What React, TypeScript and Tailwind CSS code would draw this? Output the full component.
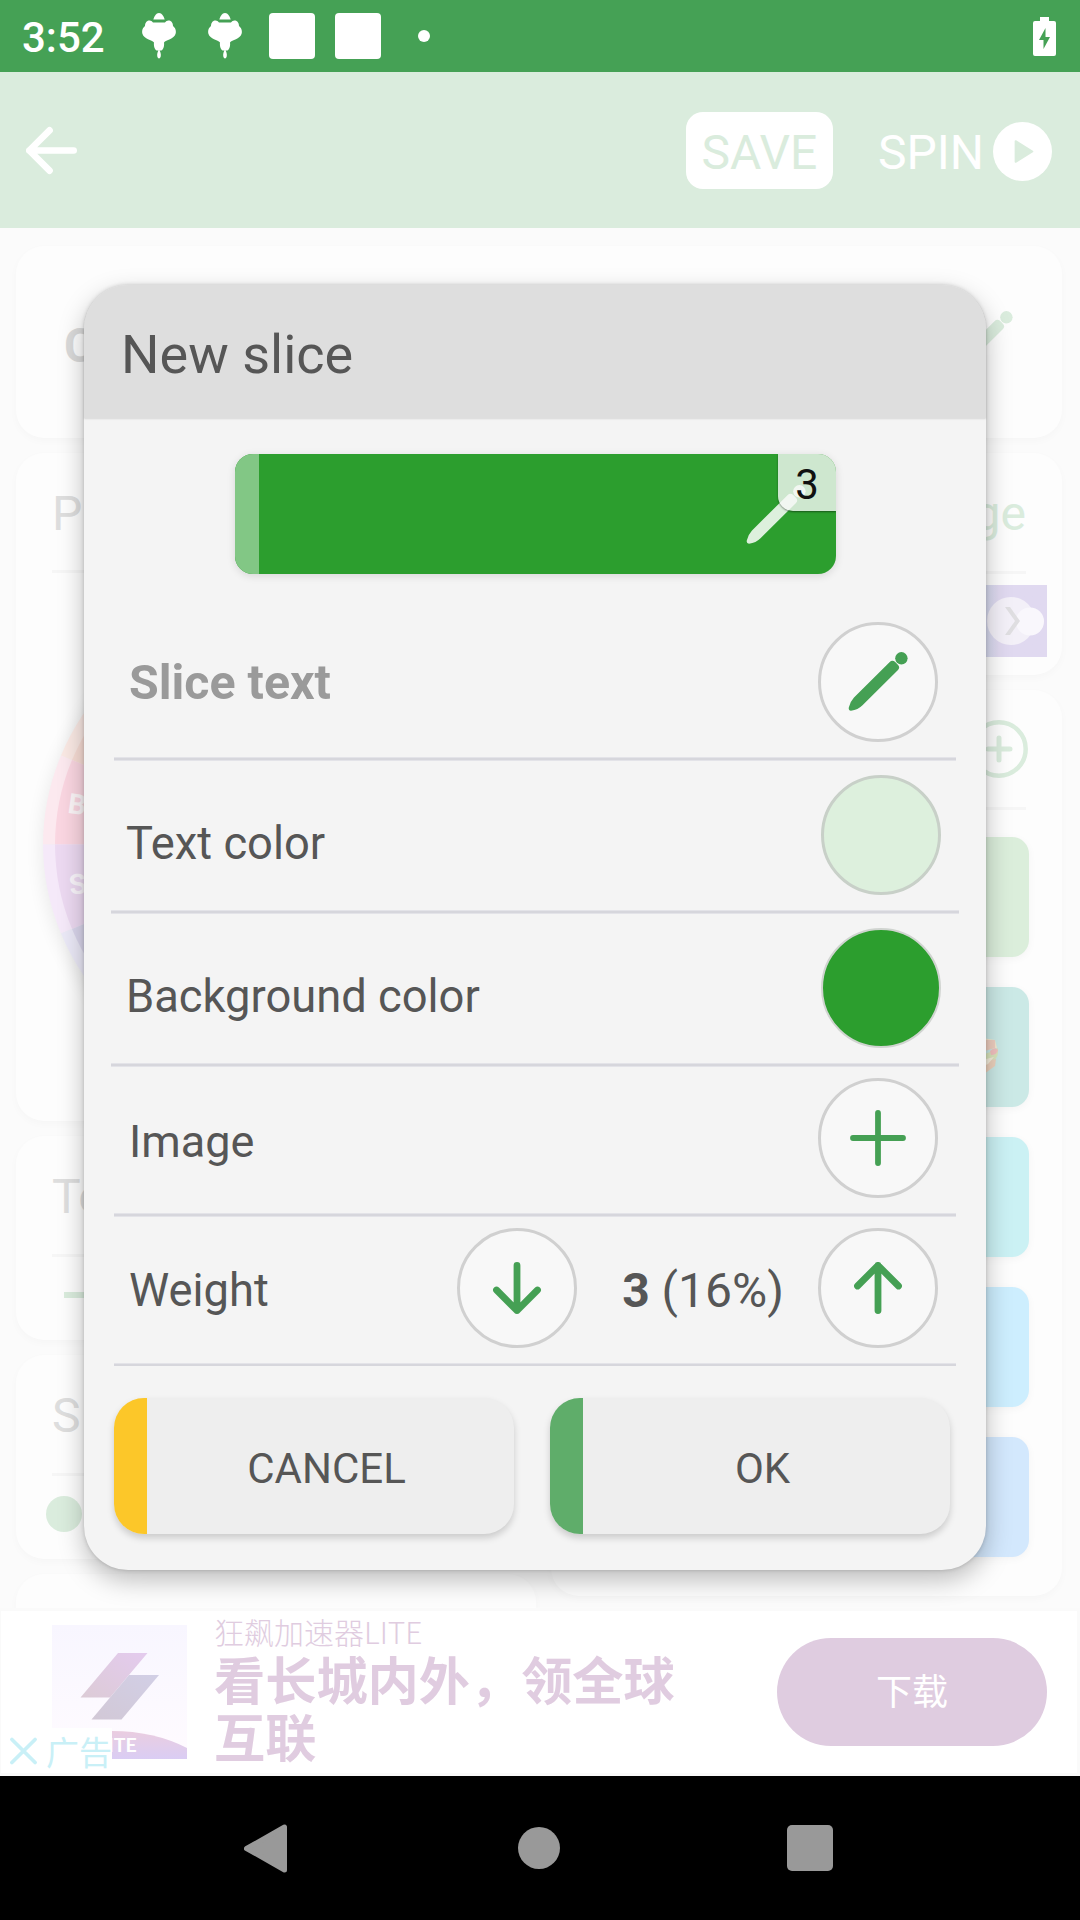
import React from "react";

function Pen({ className }: { className: string }) {
  return (
    <svg viewBox="0 0 60 60" className={className} fill="currentColor">
      <circle cx="53.4" cy="6.3" r="6.2" />
      <path d="M41.500 10.200 Q44.200 7.700 47 9.800 L50.300 13.200 Q52.200 15.600 50 18 L14.500 53.300 Q10 57.800 3 58.800 Q0.200 58.400 0.800 55.500 Q2.200 49.500 6 45.500 Z" />
    </svg>
  );
}

function Balloon() {
  return (
    <svg viewBox="0 0 34 46" className="h-[46px] w-[34px]" fill="#fff">
      <path d="M17 0 C20 0 21.500 3 22.700 6.500 H11.300 C12.500 3 14 0 17 0Z" />
      <path d="M11 9.500 H23 C25 6 31 7 31 13 C33.500 15 34.500 18 33.500 21 C32 26 24 27 22 29.500 C22.500 33 21.500 36 19.500 37.500 H14.500 C12.500 36 11.500 33 12 29.500 C10 27 2 26 .5 21 C-.5 18 .5 15 3 13 C3 7 9 6 11 9.500Z" />
      <path d="M17 36 C18 38 19.300 41 18.700 43.500 C18 46 16 46 15.300 43.500 C14.700 41 16 38 17 36Z" />
    </svg>
  );
}

function Arrow({ className }: { className: string }) {
  return (
    <svg viewBox="0 0 52 52" className={className} fill="none" stroke="currentColor" strokeWidth="6.8" strokeLinecap="round" strokeLinejoin="round">
      <path d="M26 3.400 V48.600 M5.500 24 L26 3.400 L46.500 24" />
    </svg>
  );
}

function Card({ className, children }: { className: string; children?: React.ReactNode }) {
  return (
    <div className={`overflow-hidden rounded-[28px] bg-[#fdfdfd] shadow-[0_3px_8px_rgba(0,0,0,0.025)] ${className}`}>{children}</div>
  );
}

function Hairline() {
  return <div className="h-[3px] bg-[#f6f6f6]" />;
}

function Wheel() {
  return (
    <svg viewBox="0 0 520 664" className="block h-[664px] w-[520px]">
      <defs>
        <filter id="soft" x="-20%" y="-20%" width="140%" height="140%">
          <feGaussianBlur stdDeviation="9" />
        </filter>
      </defs>
      <circle cx="260" cy="396" r="234" fill="#000" opacity=".08" filter="url(#soft)" />
      <g transform="translate(260 391.5)">
        <path d="M0 0 L-215 -89 A233 233 0 0 1 -89 -215Z" fill="#fae9e4" />
        <path d="M0 0 L-233 0 A233 233 0 0 1 -215 -89Z" fill="#fce9ef" />
        <path d="M0 0 L-215 89 A233 233 0 0 1 -233 0Z" fill="#f5e9f9" />
        <path d="M0 0 L-89 215 A233 233 0 0 1 -215 89Z" fill="#ebe9f7" />
        <path d="M0 0 L-204 -84.5 A221 221 0 0 1 -84.5 -204Z" fill="#f8ddd5" />
        <path d="M0 0 L-221 0 A221 221 0 0 1 -204 -84.5Z" fill="#fad6e1" />
        <path d="M0 0 L-204 84.5 A221 221 0 0 1 -221 0Z" fill="#ecd9f1" />
        <path d="M0 0 L-84.5 204 A221 221 0 0 1 -204 84.5Z" fill="#dad6ec" />
      </g>
      <text x="52" y="361" transform="rotate(8 60 354)" fill="#fcf6f8" fontFamily="Roboto" fontWeight="700" fontSize="28">B</text>
      <text x="53" y="441" transform="rotate(-8 60 431)" fill="#faf5fb" fontFamily="Roboto" fontWeight="700" fontSize="28">S</text>
    </svg>
  );
}

function RoundButton({ className = "border-[3px] bg-[#f8f8f8] border-[#d0d0d0]", children }: { className?: string; children?: React.ReactNode }) {
  return (
    <button className={`flex size-[120px] shrink-0 items-center justify-center rounded-full text-[#45a054] ${className}`}>{children}</button>
  );
}

function Divider() {
  return <div className="h-[4px] border-y border-[#e3e3e8] bg-[#d6d6dc]" />;
}

const sliceColors = ["bg-[#dbeedb]", "bg-[#cbe9e6]", "bg-[#cbf1f4]", "bg-[#cdeefe]", "bg-[#d3e8fd]"];

function DimmedPage() {
  return (
    <div className="flex h-[1380px] flex-col gap-[15px] overflow-hidden bg-[#fbfbfb] pt-[18px] pr-[18px] pl-[16px]">
      <Card className="flex h-[192px] shrink-0 items-center justify-between pr-[49px] pl-[48px]">
        <span className="pt-[8px] text-[48px] leading-none font-bold text-[#dadada]">C</span>
        <Pen className="mb-[2px] h-[60px] w-[60px] text-[#daecdd]" />
      </Card>
      <div className="flex gap-[15px]">
        <div className="flex w-[520px] flex-col gap-[15px]">
          <Card className="h-[668px]">
            <div className="relative">
              <Wheel />
              <div className="absolute top-[37px] left-[36px] w-[448px]">
                <div className="h-[80px] text-[48px] leading-none text-[#dedede]">P</div>
                <Hairline />
              </div>
            </div>
          </Card>
          <Card className="h-[204px] px-[36px] pt-[37px]">
            <div className="h-[81px] text-[48px] leading-none text-[#dedede]">Te</div>
            <Hairline />
            <div className="mt-[35px] ml-[12px] h-[6px] w-[120px] bg-[#daecdd]" />
          </Card>
          <Card className="h-[204px] pt-[37px]">
            <div className="mx-[36px] h-[81px] text-[48px] leading-none text-[#dedede]">S</div>
            <div className="mx-[36px]">
              <Hairline />
            </div>
            <div className="mt-[20px] ml-[30px] size-[36px] rounded-full bg-[#daecdd]" />
          </Card>
          <Card className="h-[80px]" />
        </div>
        <div className="flex w-[511px] flex-col gap-[15px]">
          <Card className="h-[222px]">
            <div className="mx-[36px] h-[118px] pt-[37px] text-right text-[48px] leading-none text-[#daecdd]">ge</div>
            <div className="mx-[36px]">
              <Hairline />
            </div>
            <div className="mt-[11px] mr-[15px] ml-[15px] flex h-[72px] items-center justify-end bg-gradient-to-r from-[#cfdcee] from-85% to-[#e0d9f0] to-90%">
              <svg viewBox="0 0 60 50" className="h-[50px] w-[60px]">
                <circle cx="24" cy="25" r="24" fill="#f3f0f8" />
                <circle cx="43" cy="25.500" r="14" fill="#f9f7fc" />
                <path d="M18 11 H23 L33 25 L23 39 H18 L28 25Z" fill="#dfdee1" />
              </svg>
            </div>
          </Card>
          <Card className="h-[906px] px-[33px] pt-[30px]">
            <div className="flex justify-end pr-[1px]">
              <svg viewBox="0 0 58 58" className="size-[58px]" fill="none" stroke="#daecdd" strokeWidth="4.500">
                <circle cx="29" cy="29" r="26.700" />
                <path d="M29 18 V40 M18 29 H40" strokeWidth="5" strokeLinecap="round" />
              </svg>
            </div>
            <div className="mx-[3px] mt-[29px] mb-[27px]">
              <Hairline />
            </div>
            <div className="flex flex-col gap-[30px]">
              {sliceColors.map((color, i) => (
                <div key={color} className={`flex h-[120px] items-center justify-end rounded-[17px] pr-[31px] shadow-[0_2px_8px_rgba(0,0,0,0.04)] ${color}`}>
                  {i === 1 && (
                    <svg viewBox="0 0 28 38" className="mt-[16px] h-[38px] w-[28px]">
                      <path d="M0 0 L25 4 L27 12 L0 16Z" fill="#f5e9d0" />
                      <path d="M8 4 L25 4 L25 12 L8 17Z" fill="#efcfc0" />
                      <path d="M0 21 Q20 18 28 12 Q29 21 24 24 L0 31Z" fill="#dbe6bd" />
                      <path d="M20 15 Q25 10 28 14 Q27 19 21 19Z" fill="#f3c2c0" />
                      <path d="M0 29 L26 23 L25 30 L14 38 L0 38Z" fill="#edd2bd" />
                      <path d="M0 27 L24 21 L18 28 L0 36Z" fill="#f6efdd" />
                    </svg>
                  )}
                </div>
              ))}
            </div>
          </Card>
        </div>
      </div>
    </div>
  );
}

function AdBanner() {
  return (
    <div className="relative flex h-[168px] border-y-[3px] border-r-[3px] border-l border-[#fafafa] bg-white font-['Noto_Sans_CJK_SC',sans-serif]">
      <svg viewBox="0 0 135 134" className="mt-[14px] ml-[51px] h-[134px] w-[135px] shrink-0">
        <defs>
          <linearGradient id="tile" x1="0" y1="0" x2="0" y2="1">
            <stop offset="0" stopColor="#f8f6ff" />
            <stop offset="1" stopColor="#fffbff" />
          </linearGradient>
          <linearGradient id="bolt1" x1="1" y1="0" x2="0" y2="1">
            <stop offset="0" stopColor="#e4cbee" />
            <stop offset="1" stopColor="#dccbd6" />
          </linearGradient>
          <linearGradient id="bolt2" x1="1" y1="0" x2="0" y2="1">
            <stop offset="0" stopColor="#d2cfe6" />
            <stop offset="1" stopColor="#d2c8d6" />
          </linearGradient>
          <linearGradient id="band" x1="0" y1="0" x2="0" y2="1">
            <stop offset="0" stopColor="#eacde0" />
            <stop offset="1" stopColor="#dacdf4" />
          </linearGradient>
        </defs>
        <path d="M0 0 H135 V134 H0Z" fill="url(#tile)" />
        <path d="M66 28 H95.500 L58 72.500 H28.500Z" fill="url(#bolt1)" />
        <path d="M77 50 H107 L69.500 94.500 H39.500Z" fill="url(#bolt2)" />
        <path d="M60 106 Q102 106 135 123 V134 H60Z" fill="url(#band)" />
        <text x="56" y="127" fill="#fff" fontFamily="Lato" fontWeight="700" fontSize="19.5">ITE</text>
      </svg>
      <div className="ml-[27px] w-[481px] text-[#e0cce0]">
        <div className="h-[39px] text-[30px] leading-[41px] font-light">狂飙加速器LITE</div>
        <div className="text-[51.200px] leading-[57px] font-bold">看长城内外，领全球互联</div>
      </div>
      <button className="mt-[27px] ml-[82px] flex h-[108px] w-[270px] items-center justify-center rounded-[54px] bg-[#dfcce0] pb-[6px] text-[36px] leading-none text-white">下载</button>
      <div className="absolute bottom-0 left-0 flex h-[45px] w-[111px] items-center bg-white pl-[9px] text-[#c9f0f7]">
        <svg viewBox="0 0 28 28" className="size-[28px]" stroke="currentColor" strokeWidth="3.800" strokeLinecap="round">
          <path d="M2 2 L26 26 M26 2 L2 26" />
        </svg>
        <span className="ml-[9px] pt-[1px] text-[33px] leading-none whitespace-nowrap">广告</span>
      </div>
    </div>
  );
}

function DialogButton({ label, strip }: { label: string; strip: string }) {
  return (
    <button className="flex h-[136px] w-[400px] overflow-hidden rounded-[30px] bg-[#eeeeee] shadow-[0_4px_7px_rgba(0,0,0,0.17)]">
      <span className={`h-full w-[33px] ${strip}`} />
      <span className="flex h-full flex-1 items-center justify-center pt-[5px] pr-[8px] text-[42px] leading-none">{label}</span>
    </button>
  );
}

function Dialog() {
  return (
    <div className="absolute top-[285px] left-[84px] h-[1285px] w-[902px] overflow-visible rounded-[44px] bg-[#f4f4f4] text-[#565656] shadow-[0_10px_26px_rgba(0,0,0,0.26),0_0_4px_rgba(0,0,0,0.18)]">
      <div className="flex h-[133px] items-center rounded-t-[44px] bg-[#dedede] pt-[6px] pl-[37px] text-[54px] leading-none shadow-[0_1px_2px_rgba(0,0,0,0.12)]">New slice</div>
      <div className="relative mt-[36px] ml-[151px] flex h-[120px] w-[601px] overflow-hidden rounded-[18px] bg-[#2c9e2e] shadow-[0_2px_8px_rgba(0,0,0,0.12)]">
        <div className="h-full w-[24px] bg-[#82c785]" />
        <Pen className="absolute top-[31px] left-[511px] h-[60px] w-[60px] text-[#ddf0dd]" />
        <div className="absolute top-0 right-0 flex h-[57px] w-[58px] items-center justify-center rounded-bl-[15px] bg-[#f7f9f7]/80 pt-[4px] text-[42px] leading-none text-[#111] shadow-[0_1px_2px_rgba(0,0,0,0.45)]">3</div>
      </div>
      <div className="mx-[30px] mt-[33px]">
        <div className="flex h-[150px] items-center justify-between pr-[18px] pl-[15px]">
          <span className="pt-[2px] text-[48.3px] leading-none font-bold text-[#9a9a9a]">Slice text</span>
          <RoundButton>
            <Pen className="h-[60px] w-[60px]" />
          </RoundButton>
        </div>
        <Divider />
      </div>
      <div className="mx-[27px]">
        <div className="flex h-[149px] items-center justify-between pr-[18px] pb-[2px] pl-[15px]">
          <span className="pt-[19px] text-[45.3px] leading-none">Text color</span>
          <RoundButton className="border-[3px] border-[#c8d0c8] bg-[#ddf0dd]" />
        </div>
        <Divider />
        <div className="flex h-[149px] items-center justify-between pr-[18px] pb-[2px] pl-[15px]">
          <span className="pt-[19px] text-[45.3px] leading-none">Background color</span>
          <RoundButton className="border-[2px] border-[#d0d4d0] bg-[#2c9e2e]" />
        </div>
        <Divider />
      </div>
      <div className="mx-[30px]">
        <div className="flex h-[146px] items-center justify-between pr-[18px] pb-[4px] pl-[15px]">
          <span className="pt-[7px] text-[45px] leading-none">Image</span>
          <RoundButton>
            <svg viewBox="0 0 56 56" className="size-[56px]" stroke="currentColor" strokeWidth="5.800" strokeLinecap="round">
              <path d="M28 3 V53 M3 28 H53" />
            </svg>
          </RoundButton>
        </div>
        <Divider />
        <div className="flex h-[146px] items-center pr-[18px] pb-[4px] pl-[15px]">
          <span className="w-[328px] pt-[6px] text-[45.3px] leading-none">Weight</span>
          <RoundButton>
            <Arrow className="size-[52px] rotate-180" />
          </RoundButton>
          <span className="flex-1 pt-[6px] pl-[11px] text-center text-[48px] leading-none">
            <b>3</b> (16%)
          </span>
          <RoundButton>
            <Arrow className="size-[52px]" />
          </RoundButton>
        </div>
        <div className="h-[3px] border-t border-[#e3e3e8] bg-[#d6d6dc]" />
        <div className="mt-[32px] flex justify-between pr-[6px]">
          <DialogButton label="CANCEL" strip="bg-[#fcc729]" />
          <DialogButton label="OK" strip="bg-[#5fad6a]" />
        </div>
      </div>
    </div>
  );
}

export default function App() {
  return (
    <div className="relative flex h-[1920px] w-[1080px] flex-col overflow-hidden bg-[#fafafa] font-['Roboto',sans-serif]">
      <div className="flex h-[72px] items-center bg-[#45a155] pl-[22px]">
        <span className="w-[120px] pt-[3px] text-[42px] leading-none font-medium text-white">3:52</span>
        <Balloon />
        <div className="ml-[32px]">
          <Balloon />
        </div>
        <div className="ml-[27px] size-[46px] rounded-[4px] bg-white" />
        <div className="ml-[20px] size-[46px] rounded-[4px] bg-white" />
        <div className="ml-[37px] size-[12px] rounded-full bg-white" />
        <svg viewBox="0 0 23 39" className="mr-[24px] ml-auto h-[39px] w-[23px]">
          <path d="M7 0 H16 V4 H21 Q23 4 23 6 V37 Q23 39 21 39 H2 Q0 39 0 37 V6 Q0 4 2 4 H7Z" fill="#fff" />
          <path d="M12.500 11 V20 H17 L10.500 32 V23 H6Z" fill="#45a155" />
        </svg>
      </div>
      <div className="flex h-[156px] items-center bg-[#daecdd] pr-[28px] pl-[26px]">
        <Arrow className="size-[51px] -rotate-90 text-white" />
        <button className="ml-auto flex h-[77px] w-[147px] items-center justify-center rounded-[17px] bg-white pt-[5px] text-[48px] leading-none text-[#daecdd]">SAVE</button>
        <span className="ml-[45px] pt-[5px] text-[48px] leading-none text-white">SPIN</span>
        <svg viewBox="0 0 60 60" className="mt-[2px] ml-[9px] size-[59px]">
          <circle cx="30" cy="30" r="30" fill="#fff" />
          <path d="M23 19.500 L40 30 L23 40.500Z" fill="#daecdd" stroke="#daecdd" strokeWidth="2" strokeLinejoin="round" />
        </svg>
      </div>
      <DimmedPage />
      <AdBanner />
      <div className="flex h-[144px] items-center bg-black">
        <svg viewBox="0 0 43 48" className="ml-[244px] h-[49px] w-[43px]">
          <path d="M40.500 2.500 V45.500 L2.500 24Z" fill="#999" stroke="#999" strokeWidth="5" strokeLinejoin="round" />
        </svg>
        <div className="ml-[231px] size-[42px] rounded-full bg-[#999]" />
        <div className="ml-[227px] size-[46px] rounded-[5px] bg-[#999]" />
      </div>
      <Dialog />
    </div>
  );
}
